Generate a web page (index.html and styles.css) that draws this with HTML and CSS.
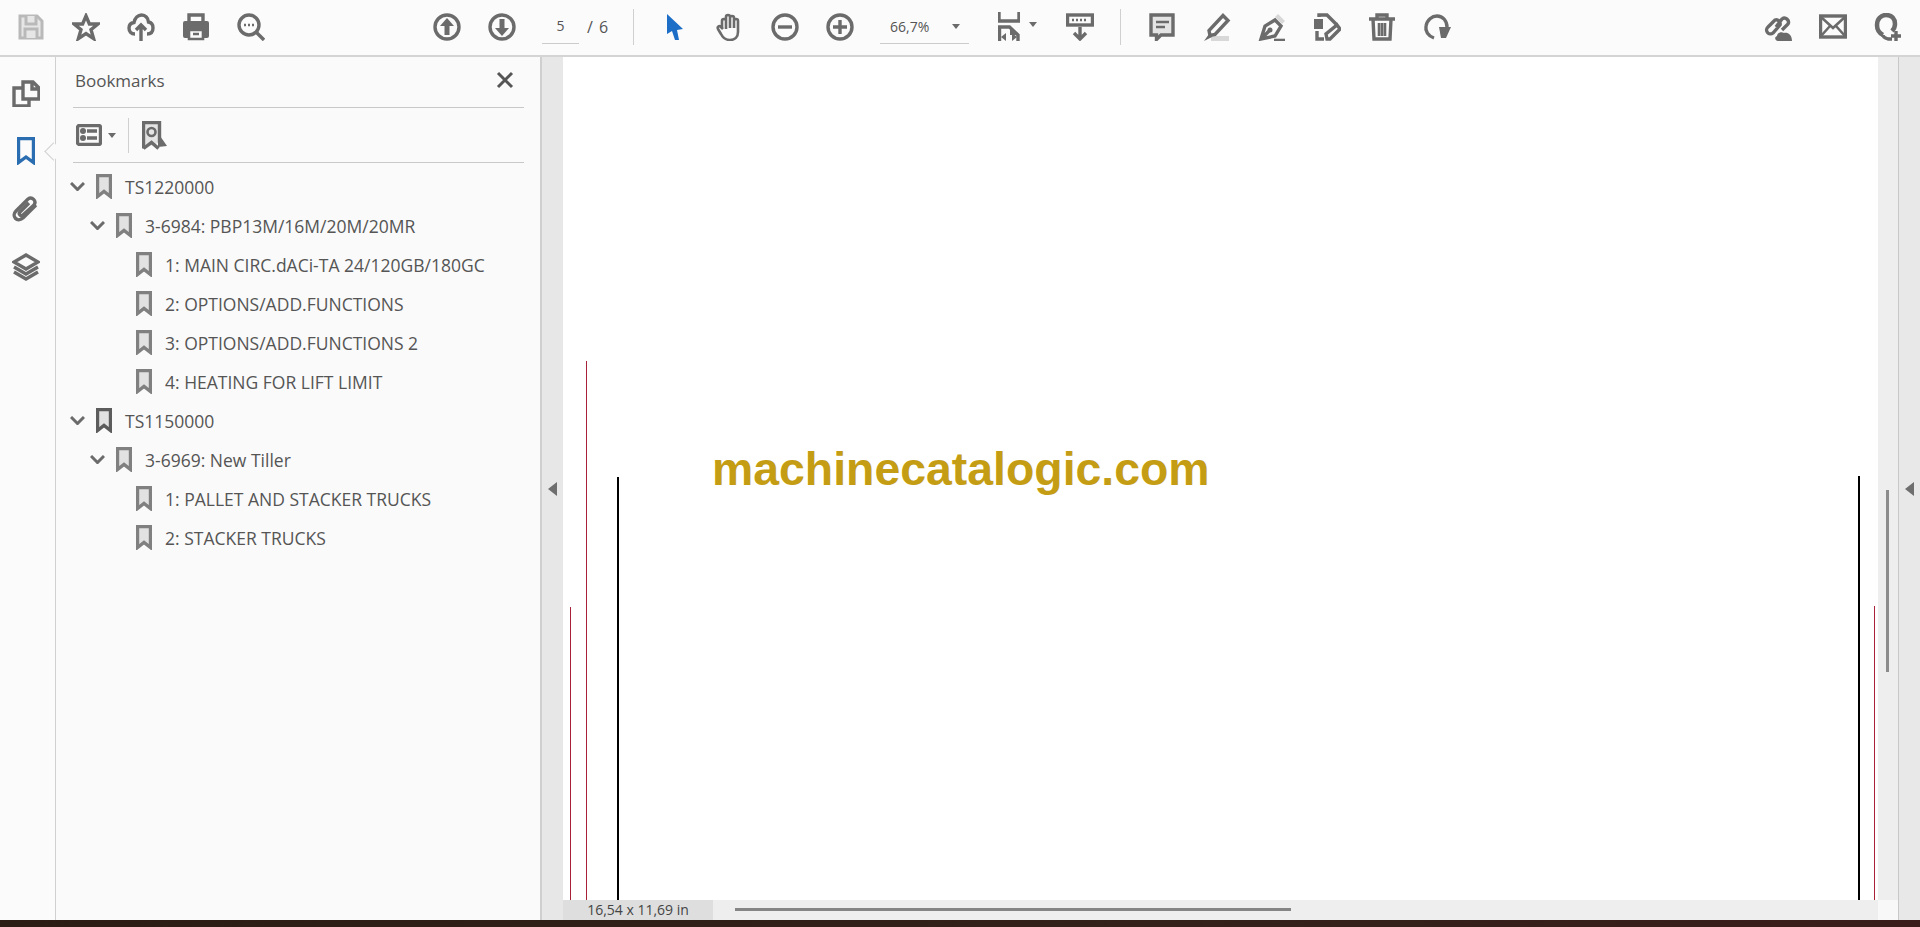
FILE: index.html
```html
<!DOCTYPE html>
<html>
    <head>
        <title>Bookmarks</title>
        <meta http-equiv="Content-Type" content="text/html; charset=UTF-8">
        <link rel="stylesheet" href="styles.css">
    </head>
    <body>
        <div class="toolbar">
            <div class="tool-group first-group">
                <svg class="icon" viewBox="0 0 28 28"><path class="dim" d="M3 3h17l5 5v17H3z"/><path class="dim" d="M9 3v8h10V3M8 25v-9h12v9"/></svg>
                <svg class="icon" viewBox="0 0 28 28"><path class="line" d="M14 3l3.400 8H26l-7 5.600 2.600 9L14 20.600 6.400 25.600l2.600-9L2 11h8.600z"/></svg>
                <svg class="icon" viewBox="0 0 28 28"><path class="line" d="M8 21c-4 0-6-2.500-6-6 0-3 2-5 5-5.500C8 5 11 2 14.500 2c4 0 6.500 3 7 7 3 .5 4.500 3 4.500 6 0 3.500-2 6-6 6"/><path class="line" d="M14 28V13M9 17l5-5 5 5"/></svg>
                <svg class="icon" viewBox="0 0 28 28"><path class="line" d="M7 9V2h14v7"/><path class="solid" d="M3 8h22a2 2 0 0 1 2 2v13a2 2 0 0 1-2 2h-3v-9H6v9H3a2 2 0 0 1-2-2V10a2 2 0 0 1 2-2z"/><path class="line thin" d="M7 17h14v9H7zM11 21h6"/></svg>
                <svg class="icon" viewBox="0 0 28 28"><circle class="line" cx="12" cy="12" r="10"/><path class="line" d="M19 19l8 8"/><path class="line thin" d="M7 12h2M11 12h2M15 12h2"/></svg>
            </div>
            <div class="tool-group page-group">
                <svg class="icon" viewBox="0 0 28 28"><circle class="line" cx="14" cy="14" r="12"/><path class="solid" d="M14 5l7 8h-4.500v9h-5v-9H7z"/></svg>
                <svg class="icon" viewBox="0 0 28 28"><circle class="line" cx="14" cy="14" r="12"/><path class="solid" d="M14 23l-7-8h4.500V6h5v9H21z"/></svg>
            </div>
            <div class="page-box"><span class="page-num">5</span><span class="page-total">/ 6</span></div>
            <div class="separator sep-one"></div>
            <div class="tool-group hand-group">
                <svg class="icon cursor" viewBox="0 0 18 28"><path class="blue" d="M1 1l16 15-6 1 2 10-4 0-3-9-5 3z"/></svg>
                <svg class="icon" viewBox="0 0 28 28"><path class="line thin" d="M6 16V8a2 2 0 0 1 4 0V4a2 2 0 0 1 4 0v1a2 2 0 0 1 4 0v3a2 2 0 0 1 4 0v11c0 5-3 8-8 8s-7-2-9-6l-3-5c-1-2 1-4 3-2l2 2M10 8v8M14 5v10M18 7v8"/></svg>
                <svg class="icon" viewBox="0 0 28 28"><circle class="line" cx="14" cy="14" r="12"/><path class="line" d="M7 14h14"/></svg>
                <svg class="icon" viewBox="0 0 28 28"><circle class="line" cx="14" cy="14" r="12"/><path class="line" d="M7 14h14M14 7v14"/></svg>
            </div>
            <div class="zoom-box"><span>66,7%</span><i class="caret"></i></div>
            <svg class="icon fit-icon" viewBox="0 0 22 30"><path class="line" d="M1 0v9h20V0"/><path class="line" d="M1.500 29V15h10l8.500 8v6"/><path class="solid" d="M12 14v9h9zM3 25l5-4v8zM19 25l-5-4v8z"/></svg>
            <i class="caret fit-caret"></i>
            <svg class="icon read-icon" viewBox="0 0 28 28"><rect class="line" x="1.500" y="2" width="25" height="10"/><path class="line thin" d="M6 7h2M10 7h2M14 7h2M18 7h2"/><path class="line" d="M14 14v12M8 20l6 6 6-6"/></svg>
            <div class="separator sep-two"></div>
            <div class="tool-group edit-group">
                <svg class="icon" viewBox="0 0 28 28"><path class="line light" d="M3 2h22v20H13l-4.500 4.500V22H3z"/><path class="line thin" d="M8 9h13M8 14h9"/></svg>
                <svg class="icon" viewBox="0 0 28 28"><path class="pale" d="M8 23h18v5H8z"/><path class="line" d="M20 2.500l5 5-13 14-5 1-1-5z"/><path class="solid" d="M6 21l3 3-8 4z"/></svg>
                <svg class="icon" viewBox="0 0 28 28"><path class="line" d="M3 26l4-13 10-6 6 6-6 10zM3 26l8-8"/><circle class="solid" cx="12" cy="17" r="2.500"/><path class="pale" d="M20 1l7 7-3 3-7-7z"/><path class="line thin" d="M16 27h11"/></svg>
                <svg class="icon" viewBox="0 0 28 28"><path class="solid" d="M1 6h9v10H1z"/><path class="line" d="M6 4V2h8l9 9v2M4 18v8h7"/><path class="line" d="M14 26l-1-5 11-9 3 4-10 10z"/></svg>
                <svg class="icon" viewBox="0 0 28 28"><path class="line" d="M1 6h26M9 6V2h10v4M5 6l1 20h16l1-20"/><path class="line thin" d="M11 10v13M14 10v13M17 10v13"/></svg>
                <svg class="icon" viewBox="0 0 28 28"><path class="line" d="M11 25C5 23 2 18 3 13 4 7 9 3 14 3c6 0 10 5 10 11"/><path class="solid" d="M16 14h12l-5 11h-5z"/></svg>
            </div>
            <div class="tool-group share-group">
                <svg class="icon" viewBox="0 0 28 28"><path class="line" d="M4 14l7-7a4 4 0 0 1 5 5l-7 8a3.500 3.500 0 0 1-5-6zM12 14l6-8a4 4 0 0 1 6 5l-6 6"/><path class="solid" d="M14 28c-3 0-4-4-1-5 0-3 4-5 7-3 3-1 8 1 8 8z"/></svg>
                <svg class="icon" viewBox="0 0 28 28"><rect class="line" x="1.500" y="3" width="25" height="21"/><path class="line thin" d="M2 4l12 11L26 4M2 23l9-10M26 23l-9-10"/></svg>
                <svg class="icon" viewBox="0 0 28 28"><path class="line heavy" d="M9 22c-4-2-6-5-6-10C3 6 7 2 12 2c6 0 9 4 9 9 0 3-1 5-3 7"/><path class="line" d="M9 22c0 2 2 3 5 4h4"/><path class="line" d="M22 18v10M17 23h10"/></svg>
            </div>
        </div>

        <div class="workspace">
            <div class="rail">
                <svg class="rail-icon" viewBox="0 0 28 28"><path class="line" d="M11 3h10l6 6v11H11zM20 3v7h7"/><path class="line" d="M10 9H2v18h15v-6"/></svg>
                <svg class="rail-icon mark-active" viewBox="0 0 18 28"><path class="blue-line" d="M1.500 1.500h15v24L9 20l-7.500 5.500z"/></svg>
                <svg class="rail-icon" viewBox="0 0 28 28"><path class="line" d="M24 10L11 23c-6 5-12-2-7-7L16 4c4-3 9 2 6 6L11 20c-2 2-5-1-3-3l9-9"/></svg>
                <svg class="rail-icon" viewBox="0 0 28 28"><path class="line" d="M14 2l12 7-12 7-12-7z"/><path class="line" d="M2 14l12 7 12-7M2 19l12 7 12-7"/></svg>
                <span class="rail-notch"></span>
            </div>

            <div class="panel">
                <div class="panel-head">
                    <span>Bookmarks</span>
                    <svg class="close-icon" viewBox="0 0 18 18"><path d="M2 2l14 14M16 2L2 16"/></svg>
                </div>
                <div class="panel-tools">
                    <svg class="list-icon" viewBox="0 0 26 22"><rect class="line" x="1.500" y="1.500" width="23" height="19" rx="2"/><path class="line" d="M11 7h10M11 14h10"/><circle class="solid" cx="7" cy="7" r="3"/><circle class="solid" cx="7" cy="14" r="3"/></svg>
                    <i class="caret list-caret"></i>
                    <div class="panel-sep"></div>
                    <svg class="ribbon-icon" viewBox="0 0 25 29"><path class="line light" d="M1.500 27.500V1.500h16v20"/><path class="line" d="M1.500 27.500l8-6 7 6"/><circle class="line thin" cx="9.500" cy="11" r="4"/><path class="solid" d="M16 12l9 13-9 1z"/></svg>
                </div>
                <div class="tree">
                    <div class="tree-row level-one">
                        <svg class="chevron" viewBox="0 0 15 9"><path d="M1 1l6.500 6.500L14 1"/></svg>
                        <svg class="mark" viewBox="0 0 16 25"><path d="M1.500 1.500h13v21L8 17.500l-6.500 5z"/></svg>
                        <span>TS1220000</span>
                    </div>
                    <div class="tree-row level-two">
                        <svg class="chevron" viewBox="0 0 15 9"><path d="M1 1l6.500 6.500L14 1"/></svg>
                        <svg class="mark" viewBox="0 0 16 25"><path d="M1.500 1.500h13v21L8 17.500l-6.500 5z"/></svg>
                        <span>3-6984: PBP13M/16M/20M/20MR</span>
                    </div>
                    <div class="tree-row level-three">
                        <svg class="mark" viewBox="0 0 16 25"><path d="M1.500 1.500h13v21L8 17.500l-6.500 5z"/></svg>
                        <span>1: MAIN CIRC.dACi-TA 24/120GB/180GC</span>
                    </div>
                    <div class="tree-row level-three">
                        <svg class="mark" viewBox="0 0 16 25"><path d="M1.500 1.500h13v21L8 17.500l-6.500 5z"/></svg>
                        <span>2: OPTIONS/ADD.FUNCTIONS</span>
                    </div>
                    <div class="tree-row level-three">
                        <svg class="mark" viewBox="0 0 16 25"><path d="M1.500 1.500h13v21L8 17.500l-6.500 5z"/></svg>
                        <span>3: OPTIONS/ADD.FUNCTIONS 2</span>
                    </div>
                    <div class="tree-row level-three">
                        <svg class="mark" viewBox="0 0 16 25"><path d="M1.500 1.500h13v21L8 17.500l-6.500 5z"/></svg>
                        <span>4: HEATING FOR LIFT LIMIT</span>
                    </div>
                    <div class="tree-row level-one">
                        <svg class="chevron" viewBox="0 0 15 9"><path d="M1 1l6.500 6.500L14 1"/></svg>
                        <svg class="mark mark-dark" viewBox="0 0 16 25"><path d="M1.500 1.500h13v21L8 17.500l-6.500 5z"/></svg>
                        <span>TS1150000</span>
                    </div>
                    <div class="tree-row level-two">
                        <svg class="chevron" viewBox="0 0 15 9"><path d="M1 1l6.500 6.500L14 1"/></svg>
                        <svg class="mark" viewBox="0 0 16 25"><path d="M1.500 1.500h13v21L8 17.500l-6.500 5z"/></svg>
                        <span>3-6969: New Tiller</span>
                    </div>
                    <div class="tree-row level-three">
                        <svg class="mark" viewBox="0 0 16 25"><path d="M1.500 1.500h13v21L8 17.500l-6.500 5z"/></svg>
                        <span>1: PALLET AND STACKER TRUCKS</span>
                    </div>
                    <div class="tree-row level-three">
                        <svg class="mark" viewBox="0 0 16 25"><path d="M1.500 1.500h13v21L8 17.500l-6.500 5z"/></svg>
                        <span>2: STACKER TRUCKS</span>
                    </div>
                </div>
            </div>

            <div class="gutter"><i class="arrow-left"></i></div>

            <div class="viewer">
                <div class="viewer-top">
                    <div class="page">
                        <div class="rule red rule-a"></div>
                        <div class="rule red rule-b"></div>
                        <div class="rule black rule-c"></div>
                        <div class="rule black rule-d"></div>
                        <div class="rule red rule-e"></div>
                        <div class="watermark">machinecatalogic.com</div>
                    </div>
                    <div class="vscroll"><div class="vthumb"></div></div>
                </div>
                <div class="statusbar">
                    <div class="page-size">16,54 x 11,69 in</div>
                    <div class="hscroll"><div class="hthumb"></div></div>
                    <div class="corner"></div>
                </div>
            </div>

            <div class="side-rail"><i class="arrow-left"></i></div>
        </div>

        <div class="taskbar"></div>
    </body>
</html>
```

FILE: styles.css
```css
html, body {
    height: 100%;
}

body {
    padding: 0;
    margin: 0;
    display: flex;
    flex-direction: column;
    overflow: hidden;
    font-family: "Open Sans", "Noto Sans", sans-serif;
    color: #555;
    background-color: #fafafa;
}

/* svg parts */
.line {
    fill: none;
    stroke: #6b6b6b;
    stroke-width: 3.4;
}

.line.thin {
    stroke-width: 2.6;
}

.line.heavy {
    stroke-width: 4.5;
}

.line.light {
    fill: #e4e4e4;
}

.solid {
    fill: #6b6b6b;
}

.pale {
    fill: #d8d8d8;
}

.dim {
    fill: #e6e6e6;
    stroke: #b9b9b9;
    stroke-width: 3;
}

.blue {
    fill: #1c6ec6;
}

.blue-line {
    fill: none;
    stroke: #2a6db0;
    stroke-width: 3.4;
}

/* top toolbar */
.toolbar {
    height: 57px;
    flex: none;
    display: flex;
    align-items: center;
    padding: 0 18px 2px 17px;
    box-sizing: border-box;
    border-bottom: 2px solid #d4d4d4;
    background-color: #fbfbfb;
}

.tool-group {
    display: flex;
    align-items: center;
    gap: 27px;
}

.icon {
    width: 28px;
    height: 28px;
    flex: none;
}

.page-group {
    margin-left: 168px;
}

.page-box {
    width: 92px;
    margin-left: 26px;
    display: flex;
    align-items: center;
    height: 34px;
    font-size: 14px;
}

.page-num {
    width: 37px;
    line-height: 34px;
    text-align: center;
    border-bottom: 1px solid #ccc;
}

.page-total {
    margin-left: 8px;
    font-size: 16px;
    word-spacing: 2px;
}

.separator {
    width: 1px;
    height: 36px;
    background-color: #d0d0d0;
    flex: none;
}

.sep-one {
    margin-left: -1px;
}

.hand-group {
    margin-left: 32px;
}

.cursor {
    width: 18px;
    margin-right: 5px;
}

.zoom-box {
    width: 89px;
    height: 34px;
    margin-left: 26px;
    padding-left: 10px;
    box-sizing: border-box;
    display: flex;
    align-items: center;
    font-size: 14px;
    border-bottom: 1px solid #ccc;
}

.caret {
    display: block;
    width: 0;
    height: 0;
    border-left: 4px solid transparent;
    border-right: 4px solid transparent;
    border-top: 5px solid #6b6b6b;
    flex: none;
}

.zoom-box .caret {
    margin-left: 23px;
}

.fit-icon {
    width: 22px;
    height: 30px;
    margin-left: 29px;
}

.fit-caret {
    margin-left: 9px;
    margin-bottom: 4px;
}

.read-icon {
    margin-left: 29px;
}

.sep-two {
    margin-left: 26px;
}

.edit-group {
    margin-left: 27px;
}

.share-group {
    margin-left: auto;
}

/* middle area */
.workspace {
    flex: 1;
    min-height: 0;
    display: flex;
}

.rail {
    position: relative;
    width: 56px;
    flex: none;
    display: flex;
    flex-direction: column;
    align-items: center;
    padding: 22px 3px 0 0;
    gap: 30px;
    box-sizing: border-box;
    background-color: #fbfbfb;
    border-right: 1px solid #d0d0d0;
}

.rail-icon {
    width: 28px;
    height: 28px;
    flex: none;
}

.mark-active {
    width: 18px;
}

.rail-notch {
    position: absolute;
    top: 88px;
    right: -5px;
    width: 12px;
    height: 12px;
    background-color: #fafafa;
    border-left: 1px solid #d0d0d0;
    border-bottom: 1px solid #d0d0d0;
    transform: rotate(45deg);
}

.panel {
    width: 486px;
    flex: none;
    padding: 0 16px 0 17px;
    box-sizing: border-box;
    background-color: #fafafa;
    border-right: 2px solid #cfcfcf;
    font-size: 17.5px;
}

.panel-head {
    height: 51px;
    display: flex;
    align-items: center;
    justify-content: space-between;
    padding: 0 10px 4px 2px;
    box-sizing: border-box;
    border-bottom: 1px solid #c8c8c8;
    font-size: 17px;
}

.close-icon {
    width: 18px;
    height: 18px;
}

.close-icon path {
    fill: none;
    stroke: #555;
    stroke-width: 3;
}

.panel-tools {
    height: 55px;
    display: flex;
    align-items: center;
    padding-left: 3px;
    box-sizing: border-box;
    border-bottom: 1px solid #c8c8c8;
}

.list-icon {
    width: 26px;
    height: 22px;
}

.list-caret {
    margin-left: 6px;
}

.panel-sep {
    width: 1px;
    height: 35px;
    margin-left: 12px;
    background-color: #d0d0d0;
}

.ribbon-icon {
    width: 25px;
    height: 29px;
    margin-left: 13px;
}

.tree {
    padding-top: 4px;
    margin-left: -17px;
}

.tree-row {
    height: 39px;
    display: flex;
    align-items: center;
    white-space: nowrap;
}

.level-one {
    padding-left: 14px;
}

.level-two {
    padding-left: 34px;
}

.level-three {
    padding-left: 80px;
}

.chevron {
    width: 15px;
    height: 9px;
    margin-right: 11px;
    flex: none;
}

.chevron path {
    fill: none;
    stroke: #6b6b6b;
    stroke-width: 3;
}

.mark {
    width: 16px;
    height: 25px;
    margin-right: 13px;
    flex: none;
}

.mark path {
    fill: #e2e2e2;
    stroke: #808080;
    stroke-width: 3.4;
}

.mark-dark path {
    stroke: #5c5c5c;
}

/* gutters */
.gutter {
    width: 21px;
    flex: none;
    display: flex;
    align-items: center;
    justify-content: center;
    background-color: #e7e7e7;
}

.arrow-left {
    display: block;
    width: 0;
    height: 0;
    border-top: 7px solid transparent;
    border-bottom: 7px solid transparent;
    border-right: 9px solid #6e6e6e;
}

.side-rail {
    width: 21px;
    flex: none;
    display: flex;
    align-items: center;
    justify-content: center;
    background-color: #e8e8e8;
    border-left: 1px solid #c8c8c8;
}

/* document */
.viewer {
    flex: 1;
    min-width: 0;
    display: flex;
    flex-direction: column;
}

.viewer-top {
    flex: 1;
    min-height: 0;
    display: flex;
}

.page {
    position: relative;
    flex: 1;
    overflow: hidden;
    background-color: #fff;
}

.rule {
    position: absolute;
    bottom: 0;
}

.red {
    width: 1px;
    background-color: #a82238;
}

.black {
    width: 2px;
    background-color: #000;
}

.rule-a {
    left: 23px;
    top: 304px;
}

.rule-b {
    left: 7px;
    top: 550px;
}

.rule-c {
    left: 54px;
    top: 420px;
}

.rule-d {
    left: 1295px;
    top: 419px;
}

.rule-e {
    left: 1311px;
    top: 549px;
}

.watermark {
    position: absolute;
    left: 149px;
    top: 389px;
    font-family: "Liberation Sans", Arial, sans-serif;
    font-weight: bold;
    font-size: 46.4px;
    line-height: 46px;
    color: #c49d14;
    white-space: nowrap;
}

.vscroll {
    width: 20px;
    flex: none;
    padding: 433px 0 0 8px;
    box-sizing: border-box;
    background-color: #eee;
}

.vthumb {
    width: 3px;
    height: 182px;
    background-color: #8c8c8c;
}

.statusbar {
    height: 20px;
    flex: none;
    display: flex;
    background-color: #eee;
}

.page-size {
    width: 150px;
    flex: none;
    text-align: center;
    font-size: 14px;
    line-height: 20px;
    color: #444;
    background-color: #dedede;
}

.hscroll {
    flex: 1;
    padding: 8px 0 0 22px;
    box-sizing: border-box;
}

.hthumb {
    width: 556px;
    height: 3px;
    background-color: #858585;
}

.corner {
    width: 20px;
    flex: none;
    background-color: #f8f8f8;
}

.taskbar {
    height: 7px;
    flex: none;
    background: linear-gradient(to right, #2b1d14, #33211a 60%, #3a1d1a);
}
```
